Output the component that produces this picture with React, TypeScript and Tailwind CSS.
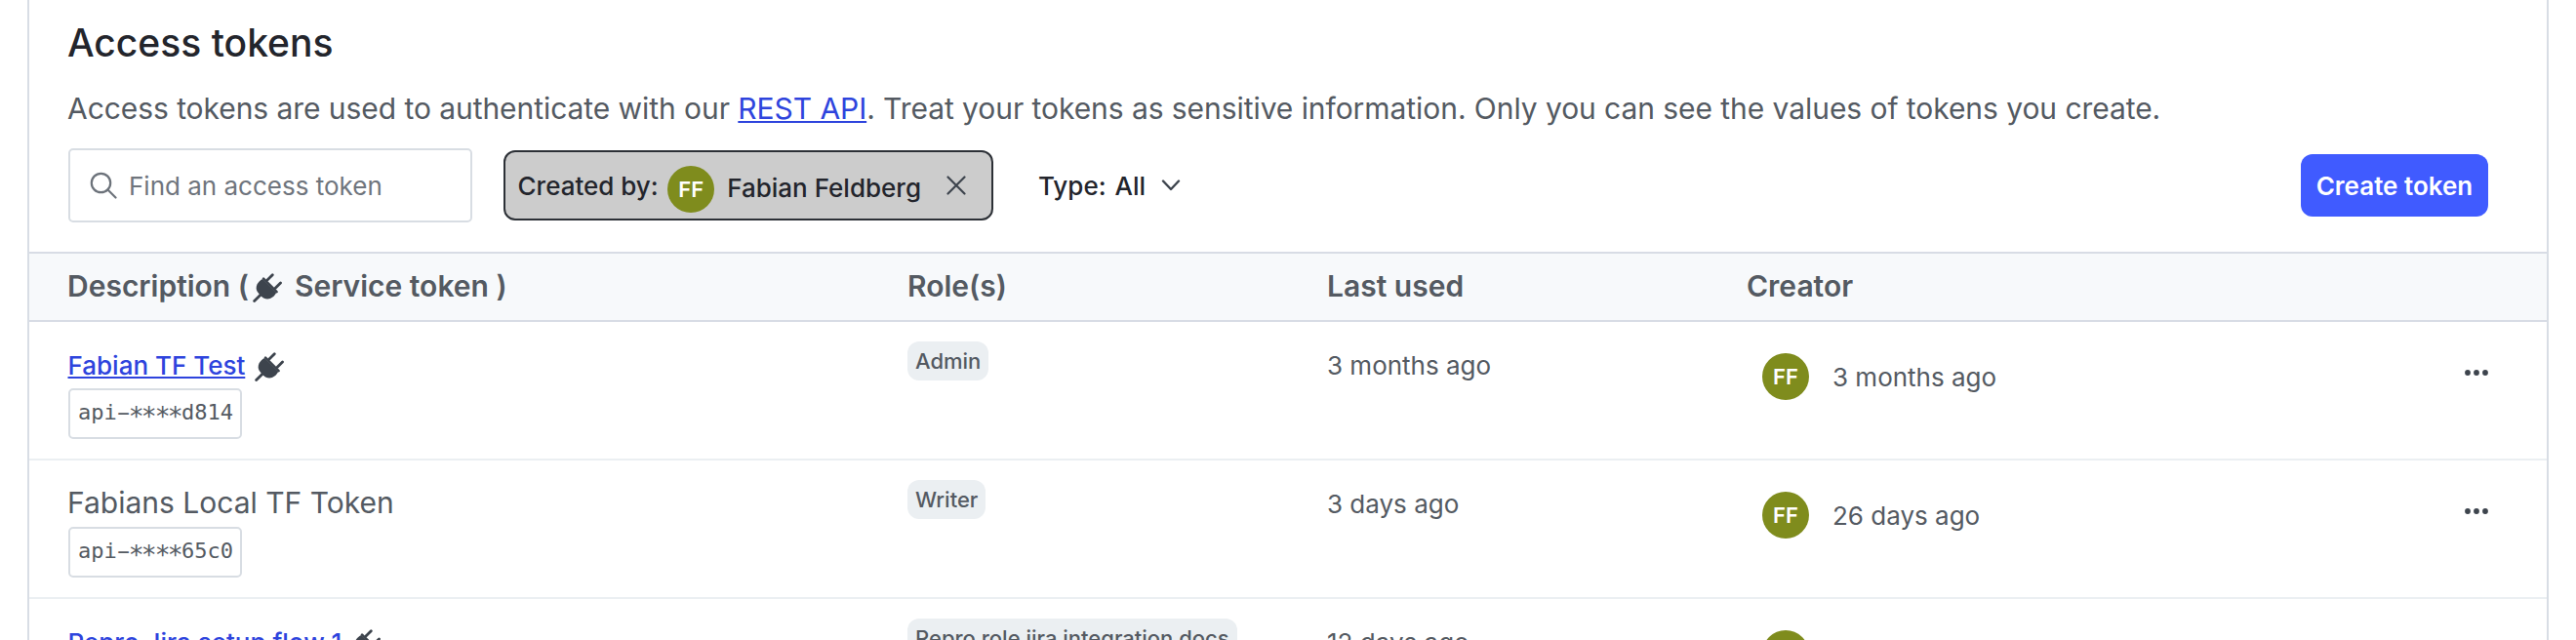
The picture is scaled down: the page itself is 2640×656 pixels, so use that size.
import { twMerge } from "tailwind-merge";

interface Token {
  name: string;
  isOwn: boolean;
  isService: boolean;
  suffix: string;
  role: string;
  lastUsed: string;
  created: string;
}

const TOKENS: Token[] = [
  {
    name: "Fabian TF Test",
    isOwn: true,
    isService: true,
    suffix: "d814",
    role: "Admin",
    lastUsed: "3 months ago",
    created: "3 months ago",
  },
  {
    name: "Fabians Local TF Token",
    isOwn: false,
    isService: false,
    suffix: "65c0",
    role: "Writer",
    lastUsed: "3 days ago",
    created: "26 days ago",
  },
  {
    name: "Repro Jira setup flow 1",
    isOwn: true,
    isService: true,
    suffix: "",
    role: "Repro role jira integration docs",
    lastUsed: "12 days ago",
    created: "",
  },
];

const GRID = "grid grid-cols-[860px_430px_430px_1fr] pl-10 pr-[59px]";

function PlugIcon({ className }: { className?: string }) {
  return (
    <svg
      viewBox="0 0 90 91"
      className={twMerge("h-[30px] w-[30px] shrink-0 text-[#3d444d]", className)}
      stroke="currentColor"
      strokeWidth="8.5"
      strokeLinecap="round"
      fill="none"
    >
      <path d="M4.5 86.5 26 65M45 21 61 5M70 46 86 30" />
      <path d="M33 17 74 58" strokeWidth="8" />
      <path
        d="M30 18C15 26 5 42 14 58Q21 70 33 77C49 86 65 76 73 61Z"
        fill="currentColor"
        stroke="none"
      />
    </svg>
  );
}

function SearchIcon() {
  return (
    <svg
      viewBox="0 0 28 28"
      className="h-7 w-7"
      fill="none"
      stroke="#6c727a"
      strokeWidth="2.2"
    >
      <circle cx="11.5" cy="11.5" r="9.7" />
      <path d="m18.500 18.500 8 8" strokeLinecap="round" />
    </svg>
  );
}

function Avatar() {
  return (
    <span className="flex h-12 w-12 shrink-0 items-center justify-center rounded-full bg-[#7f8c1d] text-[22px] leading-none font-semibold text-white">
      FF
    </span>
  );
}

function MoreIcon() {
  return (
    <svg viewBox="0 0 26 8" className="h-2 w-[26px]" fill="#3d444d">
      <circle cx="4" cy="4" r="2.9" />
      <circle cx="13" cy="4" r="2.9" />
      <circle cx="22" cy="4" r="2.9" />
    </svg>
  );
}

function TokenValue({ suffix }: { suffix: string }) {
  return (
    <code className="mt-1.5 flex h-[52px] w-[178px] items-center rounded-[5px] border-2 border-[#d8dde3] px-2 pb-[3px] font-['DejaVu_Sans_Mono',monospace] text-[22px] leading-none whitespace-nowrap text-[#545a62]">
      api
      <span className="inline-block scale-x-[1.9]">-</span>
      {/* asterisks sit on the middle of the lowercase letters */}
      {["a", "b", "c", "d"].map((key) => (
        <span key={key} className="inline-block translate-y-[5px] scale-[1.2]">
          *
        </span>
      ))}
      {suffix}
    </code>
  );
}

function TokenRow({ token }: { token: Token }) {
  return (
    <div
      className={twMerge(
        GRID,
        "h-[142px] border-b-2 border-[#ebeff2] text-[26px] last:h-[42px] last:border-b-0"
      )}
    >
      <div className="pt-7">
        <div className="flex h-[34px] items-center">
          {token.isOwn ? (
            <a
              href="#"
              className="-ml-[0.5px] pb-0.5 font-medium text-[#2e44dd] underline decoration-2 underline-offset-2"
            >
              {token.name}
            </a>
          ) : (
            <span className="-ml-px pb-1 text-[30px]">{token.name}</span>
          )}
          {token.isService && <PlugIcon className="mt-0.5 ml-[9.5px]" />}
        </div>
        {token.suffix && <TokenValue suffix={token.suffix} />}
      </div>
      <div className="pt-5">
        <span className="flex h-10 w-fit items-center rounded-xl bg-[#ebeff2] px-2 text-[22px] font-medium">
          {token.role}
        </span>
      </div>
      <div className="pt-7 leading-[34px]">{token.lastUsed}</div>
      <div className="flex items-start justify-between">
        <div className="flex items-center gap-6 pt-8 pl-4">
          <Avatar />
          <span>{token.created}</span>
        </div>
        {token.created && (
          <button className="pt-12">
            <MoreIcon />
          </button>
        )}
      </div>
    </div>
  );
}

export default function App() {
  return (
    <div className="h-[656px] overflow-hidden bg-white px-7 font-['Inter',sans-serif] text-[#545a62]">
      <section className="h-full border-x-2 border-[#d8dde5] pt-5">
        <header className="pr-[60px] pl-10">
          <h1 className="-ml-px text-[39px] leading-[48px] font-medium text-[#23252c]">
            Access tokens
          </h1>
          <p className="mt-5 -ml-px text-[30px] leading-[46px] tracking-[-0.06px]">
            Access tokens are used to authenticate with our{" "}
            <a
              href="#"
              className="text-[#2e44dd] underline decoration-2 underline-offset-2"
            >
              REST API
            </a>
            . Treat your tokens as sensitive information. Only you can see the
            values of tokens you create.
          </p>

          <div className="mt-[18px] flex h-[76px] items-center text-[26px] font-medium text-[#23252c]">
            <div className="flex h-full w-[414px] items-center rounded-[5px] border-2 border-[#d8dde3] pl-5 font-normal text-[#6f757d]">
              <SearchIcon />
              <span className="ml-3">Find an access token</span>
            </div>

            <div className="ml-8 flex h-[72px] w-[502px] items-center rounded-xl border-2 border-[#2c3036] bg-[#ccc] pl-[12.5px]">
              <span>Created by:</span>
              <span className="mt-2 ml-[9.5px] flex items-center gap-[13px]">
                <Avatar />
                <span className="pb-[3px]">Fabian Feldberg</span>
              </span>
              <svg
                viewBox="0 0 20 20"
                className="ml-[26px] h-5 w-5"
                stroke="#3d444d"
                strokeWidth="2.2"
                strokeLinecap="round"
              >
                <path d="m1.500 1.500 17 17M18.500 1.500l-17 17" />
              </svg>
            </div>

            <button className="ml-[46px] flex items-center">
              <span>Type:</span>
              <span className="ml-[9px]">All</span>
              <svg
                viewBox="0 0 20 12"
                className="ml-4 h-3 w-5"
                fill="none"
                stroke="#3d444d"
                strokeWidth="2.4"
                strokeLinecap="round"
                strokeLinejoin="round"
              >
                <path d="m2 1.500 8 8.500 8-8.500" />
              </svg>
            </button>

            <button className="ml-auto h-16 w-48 rounded-xl bg-[#405bff] font-semibold text-white">
              Create token
            </button>
          </div>
        </header>

        <div
          className={twMerge(
            GRID,
            "mt-[30px] h-[72px] items-center border-y-2 border-[#d8dce5] bg-[#f7f9fb] pb-0.5 text-[30px] font-semibold"
          )}
        >
          <div className="-ml-px flex items-center">
            <span>Description (</span>
            <PlugIcon className="mt-1 ml-1" />
            <span className="ml-[13px]">Service token )</span>
          </div>
          <div>Role(s)</div>
          <div>Last used</div>
          <div>Creator</div>
        </div>

        {TOKENS.map((token) => (
          <TokenRow key={token.name} token={token} />
        ))}
      </section>
    </div>
  );
}
